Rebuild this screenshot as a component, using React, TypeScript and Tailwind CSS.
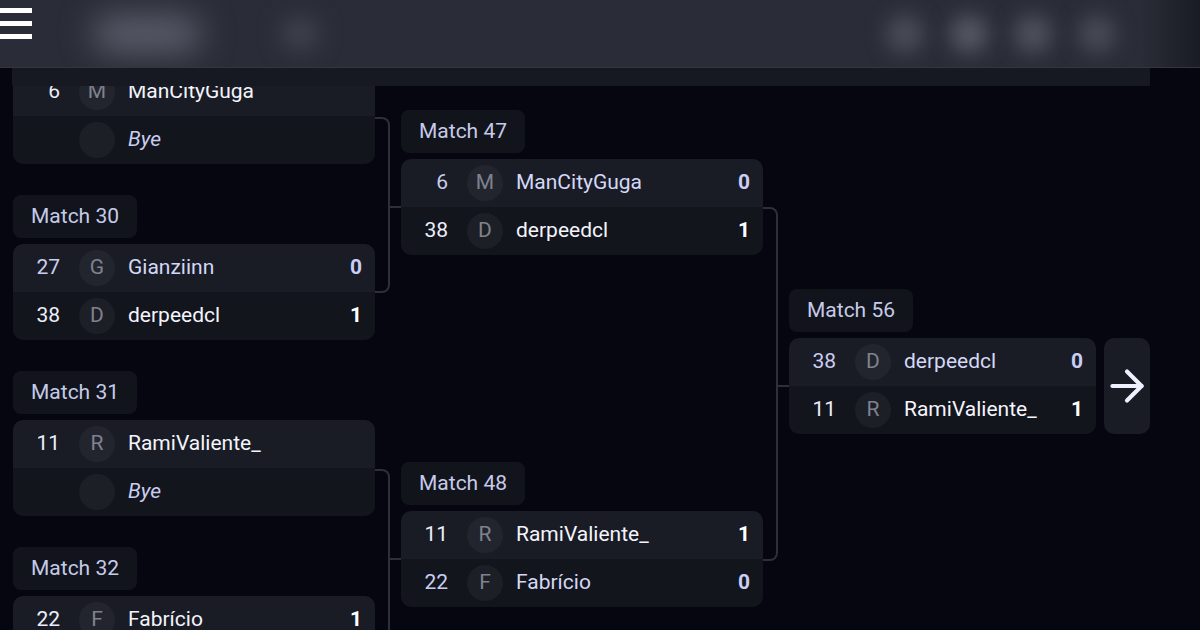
import { ArrowRight } from 'lucide-react';

type Player = {
    seed?: number;
    name: string;
    score?: number;
    win?: boolean;
};

type Match = {
    id: number;
    top: Player;
    bottom: Player;
};

const round1: Match[] = [
    { id: 29, top: { seed: 6, name: 'ManCityGuga', win: true }, bottom: { name: 'Bye' } },
    { id: 30, top: { seed: 27, name: 'Gianziinn', score: 0 }, bottom: { seed: 38, name: 'derpeedcl', score: 1, win: true } },
    { id: 31, top: { seed: 11, name: 'RamiValiente_', win: true }, bottom: { name: 'Bye' } },
    { id: 32, top: { seed: 22, name: 'Fabrício', score: 1, win: true }, bottom: { seed: 43, name: 'Nicolas', score: 0 } },
];

const round2: Match[] = [
    { id: 47, top: { seed: 6, name: 'ManCityGuga', score: 0 }, bottom: { seed: 38, name: 'derpeedcl', score: 1, win: true } },
    { id: 48, top: { seed: 11, name: 'RamiValiente_', score: 1, win: true }, bottom: { seed: 22, name: 'Fabrício', score: 0 } },
];

const final: Match = {
    id: 56,
    top: { seed: 38, name: 'derpeedcl', score: 0 },
    bottom: { seed: 11, name: 'RamiValiente_', score: 1, win: true },
};

const Row = ({ p, first }: { p: Player; first: boolean }) => {
    const bye = p.name === 'Bye';
    return (
        <div className={`flex h-[48px] items-center pr-[13px] ${first ? 'bg-[#1a1c25]' : 'bg-[#13151d]'}`}>
            <span className={`w-[47px] shrink-0 text-right ${p.win ? 'text-[#eceefa]' : 'text-[#c9cef0]'}`}>
                {p.seed ?? ''}
            </span>
            <span className="ml-[19px] flex h-[36px] w-[36px] shrink-0 items-center justify-center rounded-full bg-white/[0.045] text-[#7f828e]">
                {bye ? '' : p.name[0].toUpperCase()}
            </span>
            <span
                className={`ml-[13px] flex-1 truncate ${bye ? 'italic text-[#c9cef0]' : p.win ? 'text-[#f3f4fc]' : 'text-[#d3d8f6]'}`}
            >
                {p.name}
            </span>
            {p.score !== undefined && (
                <span className={`font-bold ${p.win ? 'text-white' : 'text-[#c8cef5]'}`}>{p.score}</span>
            )}
        </div>
    );
};

const MatchCard = ({ m, width = 'w-[362px]' }: { m: Match; width?: string }) => (
    <div className={`${width} overflow-hidden rounded-[10px]`}>
        <Row p={m.top} first />
        <Row p={m.bottom} first={false} />
    </div>
);

const MatchLabel = ({ id }: { id: number }) => (
    <div className="mb-[6px] flex h-[43px] w-fit items-center rounded-lg bg-[#12141c] px-[18px] text-[#c6cbea]">
        Match {id}
    </div>
);

const Bracket = ({ height, className }: { height: string; className?: string }) => (
    <div className={`flex items-center ${className ?? ''}`}>
        <div className={`${height} w-[15px] rounded-r-[8px] border-2 border-l-0 border-[#2d303a]`} />
        <div className="mt-[4px] h-[2px] w-[11px] bg-[#2d303a]" />
    </div>
);

export default function App() {
    return (
        <div className="relative h-[630px] w-[1200px] overflow-hidden bg-[#05060f] font-['Roboto',sans-serif] text-[21px]">
            {/* Header */}
            <header className="absolute inset-x-0 top-0 z-20 flex h-[68px] items-center overflow-hidden border-b border-[#33363f] bg-[#2a2d37]">
                <div className="flex w-[32px] flex-col gap-[8px] self-start pt-[8px]">
                    <div className="h-[5px] bg-white" />
                    <div className="h-[5px] bg-white" />
                    <div className="h-[5px] bg-white" />
                </div>
                <div className="ml-[60px] h-[38px] w-[110px] rounded-full bg-[#5a5d6a] blur-[16px]" />
                <div className="ml-[80px] h-[30px] w-[36px] rounded-full bg-[#444752] blur-[12px]" />
                <div className="ml-auto flex items-center gap-[26px] pr-[84px]">
                    <div className="h-[38px] w-[38px] rounded-full bg-[#4a4d58] blur-[10px]" />
                    <div className="h-[38px] w-[38px] rounded-full bg-[#555864] blur-[10px]" />
                    <div className="h-[38px] w-[38px] rounded-full bg-[#4f525d] blur-[10px]" />
                    <div className="h-[38px] w-[38px] rounded-full bg-[#484b56] blur-[10px]" />
                </div>
                <div className="absolute inset-y-0 right-0 w-[60px] bg-gradient-to-r from-transparent to-[#1a1c24]" />
            </header>

            {/* sticky strip under header */}
            <div className="absolute left-[12px] top-[68px] z-10 h-[18px] w-[1138px] bg-[#161822]" />

            {/* Bracket */}
            <main className="flex items-start pl-[13px]">
                {/* Round 1 */}
                <div className="flex flex-col gap-[31px] pt-[19px]">
                    {round1.map((m) => (
                        <div key={m.id}>
                            <MatchLabel id={m.id} />
                            <MatchCard m={m} />
                        </div>
                    ))}
                </div>

                <div className="flex w-[26px] flex-col pt-[117px]">
                    <Bracket height="h-[176px]" />
                    <Bracket height="h-[176px]" className="mt-[176px]" />
                </div>

                {/* Round 2 */}
                <div className="flex flex-col gap-[207px] pt-[110px]">
                    {round2.map((m) => (
                        <div key={m.id}>
                            <MatchLabel id={m.id} />
                            <MatchCard m={m} />
                        </div>
                    ))}
                </div>

                <div className="flex w-[26px] flex-col pt-[207px]">
                    <Bracket height="h-[354px]" />
                </div>

                {/* Final */}
                <div className="pt-[289px]">
                    <MatchLabel id={final.id} />
                    <div className="flex gap-[8px]">
                        <MatchCard m={final} width="w-[307px]" />
                        <button className="flex h-[96px] w-[46px] items-center justify-center overflow-visible rounded-[10px] bg-[#1a1c25] text-[#eef0ff]">
                            <ArrowRight size={50} strokeWidth={2} className="shrink-0" />
                        </button>
                    </div>
                </div>
            </main>
        </div>
    );
}
